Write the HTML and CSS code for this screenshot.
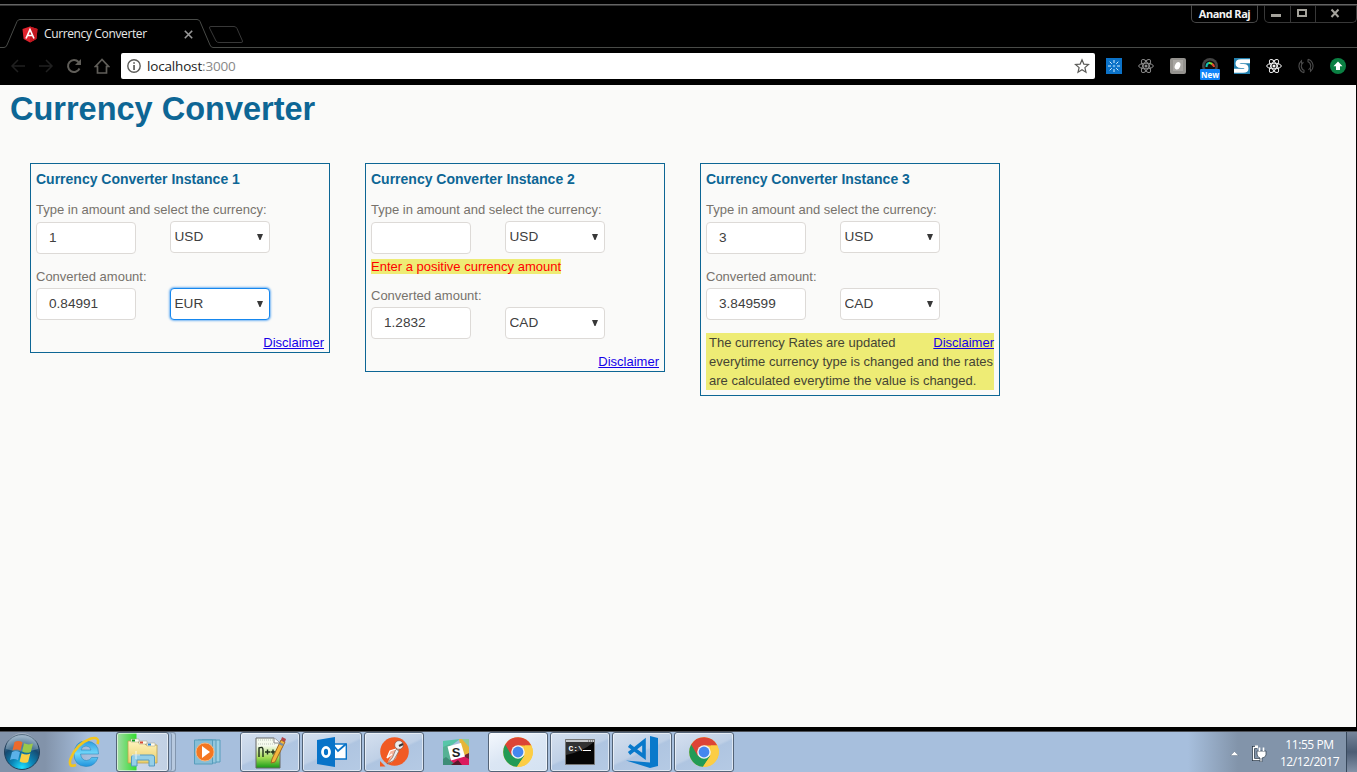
FILE: index.html
```html
<!DOCTYPE html>
<html lang="en">
<head>
<meta charset="utf-8">
<title>Currency Converter</title>
<link rel="stylesheet" href="styles.css">
</head>
<body>
<svg width="0" height="0" class="defs">
  <defs>
    <radialGradient id="orb" cx=".5" cy=".95" r=".9"><stop offset="0" stop-color="#20e0ff"/><stop offset=".35" stop-color="#0b86b8"/><stop offset=".7" stop-color="#174a70"/><stop offset="1" stop-color="#7c9ab4"/></radialGradient>
    <linearGradient id="ie" x2="0" y2="1"><stop offset="0" stop-color="#2c9ce0"/><stop offset=".5" stop-color="#72d8fa"/><stop offset="1" stop-color="#1f93dd"/></linearGradient>
    <linearGradient id="folder" x2="0" y2="1"><stop offset="0" stop-color="#fff3bd"/><stop offset="1" stop-color="#ead06c"/></linearGradient>
    <linearGradient id="npp" x2="0" y2="1"><stop offset=".25" stop-color="#f5faee"/><stop offset=".65" stop-color="#a4dc55"/><stop offset="1" stop-color="#159b16"/></linearGradient>
    <symbol id="chrome" viewBox="0 0 30 30">
      <circle cx="15" cy="15" r="14.8" fill="#fcc934"/>
      <path d="M15 15 2.2 7.6A14.8 14.8 0 0 0 14 29.8L21.4 18.7Z" fill="#229b56"/>
      <path d="M2.2 7.6A14.8 14.8 0 0 1 28.3 8.5H15L8.7 18.7Z" fill="#dc4436"/>
      <path d="M14 29.8 21.4 18.7 22 8.500H28.3A14.8 14.8 0 0 1 14 29.8Z" fill="#fccd45"/>
      <circle cx="15" cy="15" r="6.8" fill="#f3f3f3"/><circle cx="15" cy="15" r="5.4" fill="#4587ee"/>
    </symbol>
    <symbol id="react" viewBox="0 0 16 16">
      <g fill="none" stroke="currentColor" stroke-width="1"><ellipse cx="8" cy="8" rx="7.3" ry="2.8"/><ellipse cx="8" cy="8" rx="7.3" ry="2.8" transform="rotate(60 8 8)"/><ellipse cx="8" cy="8" rx="7.3" ry="2.8" transform="rotate(120 8 8)"/></g><circle cx="8" cy="8" r="1.5" fill="currentColor"/>
    </symbol>
    <symbol id="arrow" viewBox="0 0 6 6"><path d="M0 0H6L3.5 6H2.5Z" fill="#383838"/></symbol>
  </defs>
</svg>

<header class="tabstrip">
  <svg class="strip-lines" width="1357" height="48" fill="none" stroke="#484a47">
    <path d="M0 4.5H1357" stroke="#646464"/><path d="M0 5.5H1357" stroke="#343434"/>
    <path d="M0 47.5H4Q6 47.5 7 45L17 21.500Q18 19.500 20 19.500H197Q199 19.500 200 21.500L210 45Q211 47.500 213 47.500H1357"/>
    <path d="M211 26.500H234Q236 26.500 237 28.500L242.500 41Q243 42.500 241 42.500H219Q217 42.500 216 41L209.500 28Q209 26.500 211 26.500Z" stroke="#383838"/>
  </svg>
  <div class="tab">
    <svg width="16" height="17" viewBox="0 0 16 17"><path d="M8 .5 15.500 3 14.400 13 8 16.500 1.600 13 .5 3Z" fill="#e0232e"/><path d="M8 .5 15.500 3 14.400 13 8 16.500Z" fill="#c2161f"/><path d="M4 12.500 8 3.500 12 12.500M5.700 9.500H10.300" stroke="#fff" stroke-width="1.700" fill="none"/></svg>
    <span class="tab-title">Currency Converter</span>
    <svg width="9" height="9" viewBox="0 0 9 9"><path d="M.8.8 8.200 8.200M8.200.8.8 8.200" stroke="#999" stroke-width="1.600"/></svg>
  </div>
  <div class="window-controls">
    <span class="user">Anand Raj</span>
    <div class="buttons">
      <svg width="25" height="17"><path d="M6 9h10v3H6z" fill="#a5a39c"/></svg>
      <svg width="25" height="17"><path d="M7 5h8v6H7z" fill="none" stroke="#a5a39c" stroke-width="2"/></svg>
      <svg width="42" height="17"><path d="m15.500 4.500 7 7.500m0-7.500-7 7.500" stroke="#a5a39c" stroke-width="2"/></svg>
    </div>
  </div>
</header>

<nav class="toolbar">
  <div class="nav-icons">
    <svg width="16" height="16" viewBox="0 0 16 16"><path d="M15 8H2M8 2 2 8l6 6" fill="none" stroke="#202020" stroke-width="1.500"/></svg>
    <svg width="16" height="16" viewBox="0 0 16 16"><path d="M1 8h13M8 2l6 6-6 6" fill="none" stroke="#202020" stroke-width="1.500"/></svg>
    <svg width="16" height="16" viewBox="0 0 16 16"><path d="M13.500 10.500A6 6 0 1 1 12.500 4" fill="none" stroke="#605e59" stroke-width="2"/><path d="M15 1v6H9Z" fill="#605e59"/></svg>
    <svg width="16" height="16" viewBox="0 0 16 16"><path d="M8 1.500 1.500 8.500H3.500V15H12.500V8.500H14.500Z" fill="none" stroke="#605e59" stroke-width="1.700"/></svg>
  </div>
  <div class="omnibox">
    <svg width="14" height="14" viewBox="0 0 14 14"><circle cx="7" cy="7" r="6.200" fill="none" stroke="#5b5b58" stroke-width="1.400"/><path d="M6.200 3.200h1.700v1.600H6.200zM6.200 6h1.700v5H6.200z" fill="#5b5b58"/></svg>
    <span class="url">localhost<i>:3000</i></span>
    <svg width="16" height="16" viewBox="0 0 16 16"><path d="m8 1.800 1.800 4.300 4.700.4-3.600 3.100 1.100 4.600L8 11.800l-4 2.400 1.100-4.600L1.500 6.500l4.700-.4Z" fill="none" stroke="#5a5a57" stroke-width="1.200"/></svg>
  </div>
  <div class="extensions">
    <svg width="16" height="16" viewBox="0 0 16 16"><path d="M0 0h16v16H0z" fill="#0b72c8"/><g stroke="#d4edff" stroke-width="1"><path d="M8 2v3M8 11v3M2 8h3M11 8h3M3.700 3.700l2.100 2.100M10.200 10.200l2.100 2.100M12.300 3.700l-2.100 2.100M5.800 10.200l-2.100 2.100"/></g><circle cx="8" cy="8" r="1.300" fill="#6ab5ef"/></svg>
    <svg width="16" height="16" color="#8c8c8c"><use href="#react"/></svg>
    <svg width="16" height="16" viewBox="0 0 16 16"><rect width="16" height="16" rx="2" fill="#94928e"/><path d="M3 2h10v11H3z" fill="#a9a7a3"/><ellipse cx="7.500" cy="8" rx="2.600" ry="3.800" fill="#fff" transform="rotate(25 8 8)"/></svg>
    <div class="ext-new"><svg width="16" height="16" viewBox="0 0 16 16"><circle cx="8" cy="8" r="8" fill="#444"/><circle cx="8" cy="8" r="5.500" fill="#111"/><path d="M4.500 9A4 4 0 0 1 8 4.800" fill="none" stroke="#13bfb1" stroke-width="2"/><path d="M7 5a4 4 0 0 1 4 2" fill="none" stroke="#79df32" stroke-width="2"/><path d="M10 6q2 1 2 3" fill="none" stroke="#e8452c" stroke-width="2"/></svg><b>New</b></div>
    <svg width="16" height="16" viewBox="0 0 16 16"><path d="M0 0h16v16H0z" fill="#2380ae"/><path d="M16 3.200H7Q3.500 3.200 3.500 5.600T7 8h2.500Q12.500 8 12.500 10.400T9 12.800H0" fill="none" stroke="#fff" stroke-width="4"/></svg>
    <svg width="16" height="16" color="#f3f3f3"><use href="#react"/></svg>
    <svg width="16" height="16" viewBox="0 0 16 16"><path d="M6 14.700A7 7 0 0 1 3.500 2.600V5.500M10 1.300A7 7 0 0 1 12.500 13.400V10.500M6.500 12.500A4.600 4.600 0 0 1 5.500 4.200M9.500 3.500A4.600 4.600 0 0 1 10.500 11.800M6 14.700V12M10 1.300V4" fill="none" stroke="#4c4c4c" stroke-width="1.100"/></svg>
    <svg width="16" height="16" viewBox="0 0 16 16"><circle cx="8" cy="8" r="8" fill="#0b8043"/><path d="m8 3.500 4.500 4.700H10V12H6V8.200H3.500Z" fill="#fff"/></svg>
  </div>
</nav>

<main class="page">
  <h1>Currency Converter</h1>
  <div class="cards">
    <section class="card">
      <h2>Currency Converter Instance 1</h2>
      <label>Type in amount and select the currency:</label>
      <div class="fields first"><input value="1"><div class="picker"><select><option>USD</option></select><svg width="6" height="6"><use href="#arrow"/></svg></div></div>
      <label class="converted">Converted amount:</label>
      <div class="fields"><input value="0.84991"><div class="picker focused"><select><option>EUR</option></select><svg width="6" height="6"><use href="#arrow"/></svg></div></div>
      <div class="foot"><a href="#">Disclaimer</a></div>
    </section>
    <section class="card">
      <h2>Currency Converter Instance 2</h2>
      <label>Type in amount and select the currency:</label>
      <div class="fields first"><input value=""><div class="picker"><select><option>USD</option></select><svg width="6" height="6"><use href="#arrow"/></svg></div></div>
      <div class="error"><span>Enter a positive currency amount</span></div>
      <label class="converted">Converted amount:</label>
      <div class="fields"><input value="1.2832"><div class="picker"><select><option>CAD</option></select><svg width="6" height="6"><use href="#arrow"/></svg></div></div>
      <div class="foot"><a href="#">Disclaimer</a></div>
    </section>
    <section class="card open">
      <h2>Currency Converter Instance 3</h2>
      <label>Type in amount and select the currency:</label>
      <div class="fields first"><input value="3"><div class="picker"><select><option>USD</option></select><svg width="6" height="6"><use href="#arrow"/></svg></div></div>
      <label class="converted">Converted amount:</label>
      <div class="fields"><input value="3.849599"><div class="picker"><select><option>CAD</option></select><svg width="6" height="6"><use href="#arrow"/></svg></div></div>
      <div class="foot note"><a href="#">Disclaimer</a>The currency Rates are updated<br>everytime currency type is changed and the rates<br>are calculated everytime the value is changed.</div>
    </section>
  </div>
</main>

<footer class="taskbar">
  <div class="start"><svg width="38" height="38" viewBox="0 0 38 38"><circle cx="19" cy="19" r="17.500" fill="url(#orb)" stroke="#22415c"/><path d="M3 16A16 16 0 0 1 35 16Q19 21 3 16Z" fill="#fff" opacity=".25"/><path d="M11.500 9q4-2.300 8 .3l-2 8.500q-4-2.300-8-.3Z" fill="#ed6a2c"/><path d="M21 10.300q4.500 2 9 .3l-2.200 8.300q-4.500 2-8.600-.3Z" fill="#9bc84a"/><path d="M9 19q4-2 8 .3l-2 8q-4-2.300-8-.3Z" fill="#5bb1e8"/><path d="M18.600 20.200q4.300 2.300 8.700.4l-2.200 8.300q-4.300 2-8.500-.4Z" fill="#fbcf43"/></svg></div>
  <div class="task plain"><svg width="32" height="32" viewBox="0 0 32 32"><path d="M30.500 18H12.500Q13.500 24.500 18.500 24.500 22 24.500 23.500 21.500H30Q27 30.500 18 30.500 6 30 6 17.500 7 5 18 5 31 6 30.500 18ZM13 14H23Q22.500 10 18 10 13.500 10 13 14Z" fill="url(#ie)" stroke="#2887bd" stroke-width=".6" fill-rule="evenodd"/><path d="M8 29Q0 32 2.500 23 8 8 23 2.500 32 .5 29.500 8" fill="none" stroke="#f2c51f" stroke-width="2.600"/></svg></div>
  <div class="task stack"><div class="task-box copy"><svg width="34" height="32" viewBox="0 0 34 32"><path d="M2 5H11L13 7H18L20 9H31V27H2Z" fill="url(#folder)" stroke="#bda14f" stroke-width=".8"/><path d="M5 3h8v3H5zM13 5h8v3h-8zM21 7h8v3h-8z" fill="#fffbed" stroke="#aaa183" stroke-width=".5"/><path d="M6 3.500h3v2H6z" fill="#129b20"/><path d="M14 5.500h3v2h-3z" fill="#d84932"/><path d="M22 7.500h3v2h-3z" fill="#2487da"/><path d="M5.500 30V21Q5.500 19 8 19H26Q28.500 19 28.500 21V30H23V24H11V30Z" fill="#94cfe8" stroke="#569bc2"/><path d="M10 15v8M6 19h8" stroke="#fff" opacity=".8"/></svg></div></div>
  <div class="task plain"><svg width="30" height="30" viewBox="0 0 30 30"><path d="M9 3h18v22H9z" fill="#9fd0e4" stroke="#579dbc"/><path d="M5 3h18v23H5z" fill="#94c7dd" stroke="#579dbc"/><path d="M1.500 3h18v24h-18z" fill="#86bed7" stroke="#579dbc"/><circle cx="12" cy="15" r="9" fill="#f47721" stroke="#f7b67e"/><path d="m9 9 8 6-8 6Z" fill="#fff"/></svg></div>
  <div class="task window"><svg width="32" height="34" viewBox="0 0 32 34"><path d="M2 3H20L26 8V33H2Z" fill="url(#npp)" stroke="#666"/><path d="M20 3v5h6" fill="#fff" stroke="#888"/><path d="M4 5h15M4 9h18" stroke="#bcc4ba" stroke-dasharray="1 1"/><path d="M5 22V13Q9 11 9 15V22M11 17h5M13.500 14.500v5M16.500 17h5M19 14.500v5" fill="none" stroke="#20301c" stroke-width="1.400"/><path d="m27 5 4 2-10 20-4 1 1-4Z" fill="#f4b63c" stroke="#9c6622"/><path d="m27 5 1-3 4 2-1 3Z" fill="#b2464c"/><path d="m25 8 4 2" stroke="#778ca0" stroke-width="2"/></svg></div>
  <div class="task window"><svg width="32" height="32" viewBox="0 0 32 32"><path d="M16 8h14.300v15H16z" fill="#fff" stroke="#0873c8" stroke-width="1.400"/><path d="m17 9 5 6 8-7" fill="none" stroke="#0873c8" stroke-width="1.800"/><path d="M1 4 19 1V31L1 28Z" fill="#0873c8"/><ellipse cx="10" cy="16" rx="3.500" ry="4.600" fill="none" stroke="#fff" stroke-width="2.800"/></svg></div>
  <div class="task window"><svg width="32" height="32" viewBox="0 0 32 32"><circle cx="16.500" cy="15.500" r="14.300" fill="#f15a24"/><path d="M2 25v5.500H7.500Z" fill="#f15a24"/><path d="m18 13-6 2-3 6 4-2-4 9 5-5-1 4 5-5 3-9Z" fill="#f7b49b"/><path d="m18 13-3.500 8.500L9 28l6.500-3.500L21 15Z" fill="#eee" stroke="#7c6259" stroke-width=".7"/><path d="m18 13-6 2-3 7 5-4" fill="none" stroke="#fff" stroke-width="1.300"/><circle cx="21" cy="9" r="4.300" fill="#eee" stroke="#775044" stroke-width=".6"/><path d="m21 10 4-2" stroke="#343434" stroke-width="2"/></svg></div>
  <div class="task plain"><svg width="26" height="26" viewBox="0 0 26 26"><path d="M0 2 17 0 5 9 0 8Z" fill="#58c6a9"/><path d="M0 8 7 5 9 25H0Z" fill="#55b194"/><path d="M16 0H26V15L20 17Z" fill="#e7b638"/><path d="m19 0 7 8V0Z" fill="#8cc9a0"/><path d="M4 26 8 19 26 15V26Z" fill="#db1a5e"/><path d="M3 18 13 26H0V20Z" fill="#3d8d77"/><path d="m8 26 7-5 4 5Z" fill="#5a1a2b"/><path d="m20 17 6-3v6Z" fill="#6d2936"/><path d="M4.500 7.500 18 4 22 17.500 8 21.500Z" fill="#fff"/><text x="13" y="18" class="slack-letter">S</text></svg></div>
  <div class="task window active"><svg width="30" height="30"><use href="#chrome"/></svg></div>
  <div class="task window"><svg class="console" width="30" height="26" viewBox="0 0 30 26"><path d="M.5.500h29v25H.5z" fill="#050505" stroke="#777"/><path d="M1 1h28v2H1z" fill="#c6c9cc"/><path d="M23 1.500h1v1h-1zM25 1.500h1v1h-1zM27 1.500h1v1h-1z" fill="#555"/><path d="M1 3h28Q17 13 1 16Z" fill="#333"/><text x="3.500" y="12" class="cmd">C:\</text><path d="M18 11.500h8" stroke="#fff"/></svg></div>
  <div class="task window"><svg width="34" height="34" viewBox="0 0 34 34"><path d="m25 1 8 2V31l-8 2L1 25.500l24 2Z" fill="#0879cb"/><path d="M4 10.500 19 21.500V6.500L4 18.500" fill="none" stroke="#0879cb" stroke-width="3.600"/></svg></div>
  <div class="task window"><svg width="30" height="30"><use href="#chrome"/></svg></div>
  <div class="tray">
    <svg width="9" height="5"><path d="M.5 4.500 4.500.5l4 4Z" fill="#fff" stroke="#586779" stroke-width=".4"/></svg>
    <svg width="15" height="17" viewBox="0 0 15 17"><path d="M5 2.500H1.500v12H8M3 1h3" fill="none" stroke="#263544" stroke-width="3"/><path d="M6 2.500H1.500v12H8M3 1h3" fill="none" stroke="#fff" stroke-width="1.400"/><path d="M5 6h9v4q-1 3-4 3v4H8v-4q-3-1-3-4Z" fill="#fff" stroke="#394755" stroke-width=".8"/><path d="M7.500 6V2.500M11.500 6V2.500" stroke="#fff" stroke-width="1.600"/></svg>
    <div class="clock"><span>11:55 PM</span><span class="date">12/12/2017</span></div>
    <div class="show-desktop"></div>
  </div>
</footer>
</body>
</html>
```

FILE: styles.css
```css
* { box-sizing: border-box; }
body { margin: 0; width: 1357px; height: 772px; overflow: hidden; background: #000; font-family: "Liberation Sans", Arial, sans-serif; display: flex; flex-direction: column; }
svg { display: block; flex: none; }
.defs { position: absolute; }

.tabstrip { position: relative; height: 48px; flex: none; display: flex; justify-content: space-between; }
.strip-lines { position: absolute; inset: 0; }
.tab { position: relative; display: flex; align-items: center; height: 28px; margin: 20px 0 0 22px; width: 172px; font: 12px "Open Sans", sans-serif; color: #e8e8e8; }
.tab-title { margin: -1px 0 0 6px; width: 140px; white-space: nowrap; letter-spacing: -.37px; }
.window-controls { position: relative; display: flex; gap: 6px; margin-top: 5px; height: 18px; }
.user { width: 67px; height: 18px; border: 1px solid #484848; border-top: 0; border-radius: 0 0 5px 5px; text-align: center; font: bold 11px/18px "Open Sans", sans-serif; letter-spacing: -.5px; color: #f3f3f3; }
.buttons { display: flex; border: 1px solid #383838; border-top: 0; border-radius: 0 0 5px 5px; height: 18px; width: 93px; }
.buttons svg + svg { border-left: 1px solid #383838; }

.toolbar { height: 37px; flex: none; display: flex; align-items: center; padding-bottom: 1px; }
.nav-icons { display: flex; gap: 12px; padding-left: 10px; width: 121px; }
.omnibox { width: 974px; height: 26px; background: #fff; border-radius: 2px; display: flex; align-items: center; padding: 0 5px 0 6px; }
.url { flex: 1; margin-left: 6px; font: 13.5px "Open Sans", sans-serif; color: #222; letter-spacing: -.17px; }
.url i { font-style: normal; color: #888; }
.extensions { display: flex; gap: 16px; margin-left: 11px; }
.ext-new { position: relative; width: 16px; height: 16px; }
.ext-new b { position: absolute; left: -2px; top: 11px; width: 20px; height: 11px; border-radius: 1px; background: #1284f8; color: #fff; font: bold 8px/11px "Open Sans", sans-serif; text-align: center; }

.page { width: 1356px; height: 642px; flex: none; background: #fafaf9; padding: 5px 0 0 10px; }
h1 { margin: 0; font-size: 32.5px; line-height: 39px; height: 73px; color: #0d6695; }
.cards { display: flex; align-items: flex-start; gap: 35px; margin-left: 20px; }
.card { width: 300px; border: 1px solid #0d6695; padding: 5px 5px 0; font-size: 13px; line-height: 19px; }
.card.open { padding-bottom: 5px; }
h2 { margin: 0 0 11px; font-size: 14px; line-height: 20px; color: #0d6695; white-space: nowrap; }
label { display: block; color: #77726c; }
.fields { display: flex; gap: 34px; margin-top: 2px; }
.fields.first { height: 33px; }
.fields.first input { margin-top: 1px; }
input, select { width: 100px; height: 32px; border: 1px solid #dddad7; border-radius: 4px; background: #fff; color: #404040; font: 13.6px "Liberation Sans", Arial, sans-serif; }
input { padding: 0 12px 2px; }
select { display: block; appearance: none; padding: 0 3.5px 1px; }
.fields:not(.first) select { padding-bottom: 2px; }
.picker { position: relative; }
.picker svg { position: absolute; right: 7px; top: 13px; }
.focused select { border-color: #1687ee; box-shadow: 0 0 2px 1px #78b6f3; outline: 0; }
.error { height: 19px; margin-top: 3px; color: #f00; }
.error span { background: #eeec75; }
.converted { margin-top: 13px; }
.error + .converted { margin-top: 10px; }
.foot { margin-top: 13px; text-align: right; }
.foot a { color: #1500e8; }
.note { text-align: left; padding-left: 3px; background: #eeec75; color: #454534; white-space: nowrap; }
.note a { float: right; }

.taskbar { margin-top: 4px; height: 41px; flex: none; display: flex; gap: 2px; border-top: 1px solid #4c5057; background: linear-gradient(90deg, #8293aa 0, #8293aa 45px, #a7bfdd 88px, #a7bfdd 1188px, #8294aa 1238px, #8294aa); overflow: hidden; }
.start { width: 52px; padding: 1px 0 0 3px; }
.task { width: 60px; height: 40px; display: flex; align-items: center; justify-content: center; }
.window, .task-box { border: 1px solid #536377; border-radius: 3px; box-shadow: inset 0 0 0 1px #ffffff90; background: linear-gradient(155deg, #d5e0ef 0, #bfd0e6 48%, #afc5e1 52%, #b5cae4); }
.window.active { background: linear-gradient(155deg, #f4f8fd, #dbe6f4 50%, #d4e2f2); }
.stack { position: relative; justify-content: flex-start; border: 1px solid #8296ae; border-left: 0; border-radius: 3px; box-shadow: inset -3px 0 #b7c9df, inset -4px 0 #8498b1; }
.task-box { width: 53px; height: 40px; display: flex; align-items: center; padding-left: 9px; }
.copy { background: linear-gradient(90deg, #a2dca5 0, #35dc31 19px, #cbd8e9 20px, #c1d0e3); }
.console { margin-top: -1px; }
.slack-letter { font: bold 13px "Liberation Sans", sans-serif; text-anchor: middle; fill: #222; }
.cmd { font: bold 8px "Liberation Mono", monospace; fill: #fff; }
.tray { margin-left: auto; display: flex; align-items: center; height: 40px; color: #fff; }
.tray > svg:first-child { margin-right: 13px; margin-top: 2px; }
.tray > svg:nth-child(2) { margin-top: 2px; }
.clock { width: 72px; margin: 1px 0 0 7px; padding-right: 1px; display: flex; flex-direction: column; align-items: center; font: 12px/17px "Open Sans", sans-serif; letter-spacing: -.4px; }
.date { letter-spacing: -.45px; }
.show-desktop { width: 11px; height: 40px; border-left: 1px solid #38495c; background: linear-gradient(#76859a, #4c5d74 50%, #8493a8); }
```
